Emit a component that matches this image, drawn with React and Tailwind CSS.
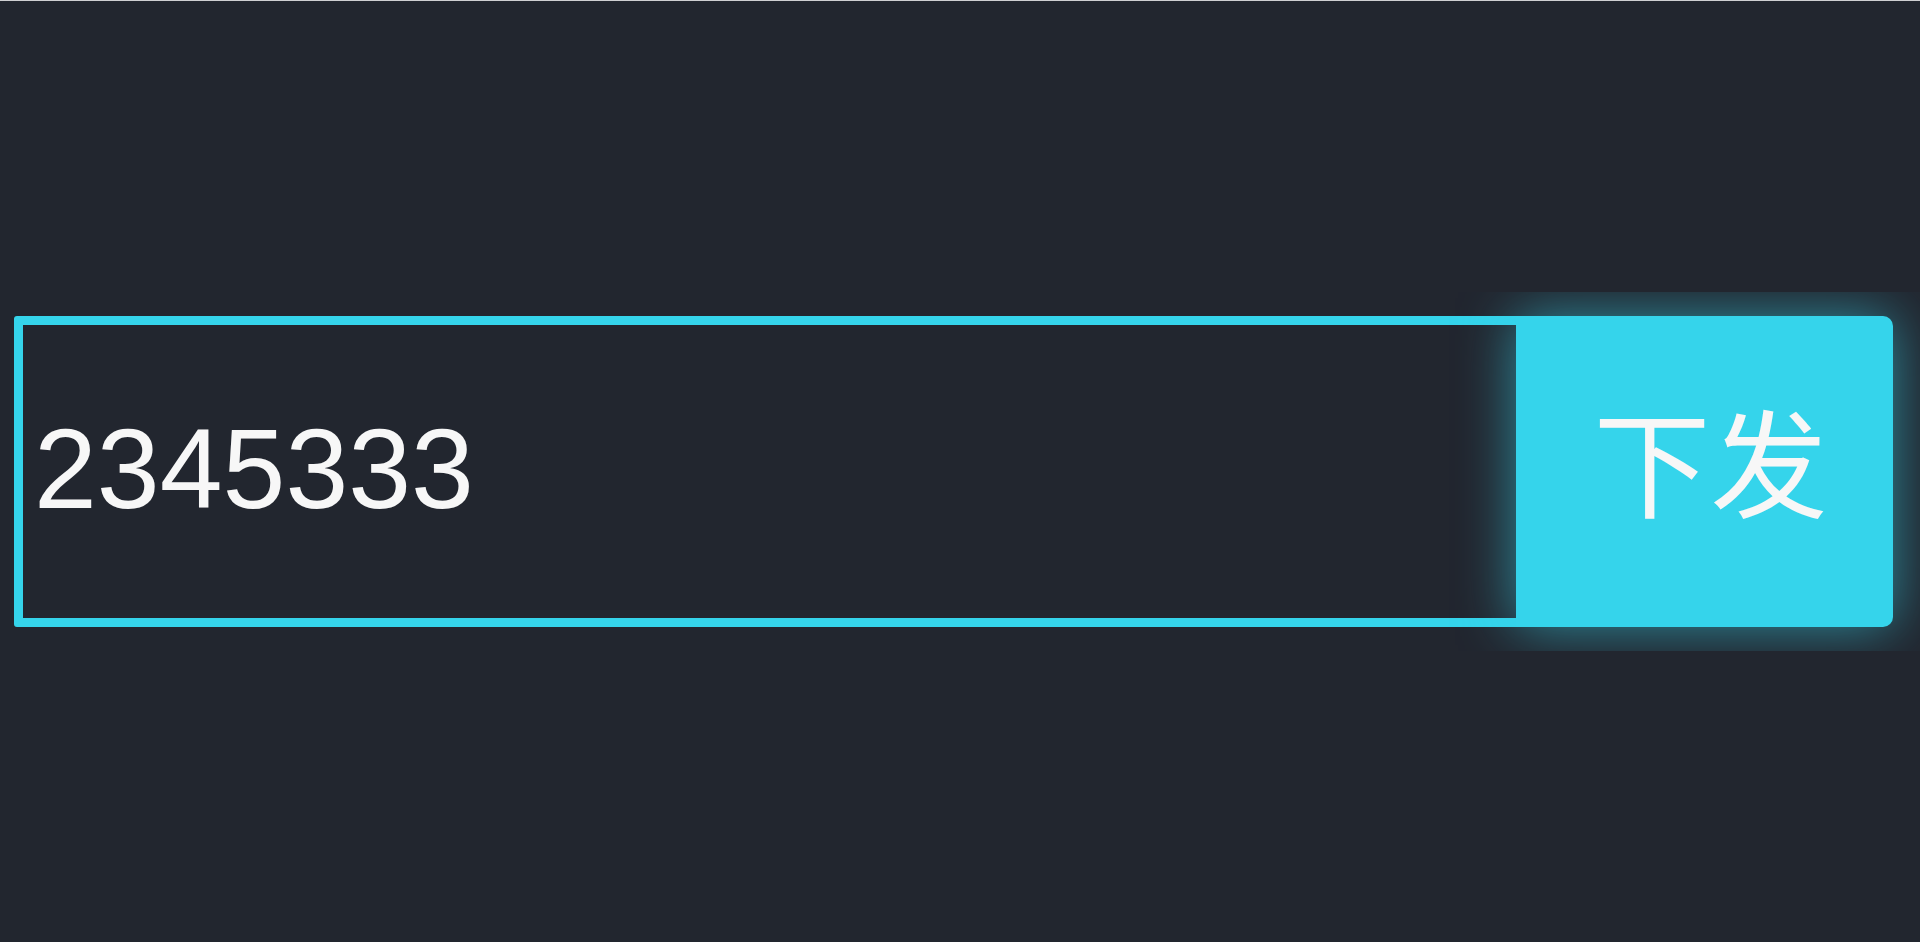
import { useState } from 'react';

export default function App() {
  const [value, setValue] = useState('2345333');

  return (
    <div className="h-screen w-full bg-[#22262f] border-t border-[#cfd0d2] flex flex-col justify-center overflow-hidden">
      <div className="py-6 -mt-px overflow-hidden">
        <div className="flex items-stretch h-[311px] pl-[14px] pr-[27px]">
          <div className="flex-1 flex items-center border-[9px] border-[#35d4eb] rounded-[3px] bg-[#22262f]">
            <input
              value={value}
              onChange={e => setValue(e.target.value)}
              className="w-full bg-transparent outline-none pl-[11px] pb-[5px] text-[113px] leading-none text-[#f7f7f7] font-['Liberation_Sans',Arial,sans-serif]"
            />
          </div>
          <button className="relative -ml-[9px] w-[377px] rounded-r-[10px] bg-[#35d4eb] text-[#f7f7f7] text-[117px] leading-none pl-[12px] pb-[6px] shadow-[0_0_55px_rgba(53,212,235,0.6)] font-['Liberation_Sans','Noto_Sans_CJK_SC',sans-serif]">
            下发
          </button>
        </div>
      </div>
    </div>
  );
}
